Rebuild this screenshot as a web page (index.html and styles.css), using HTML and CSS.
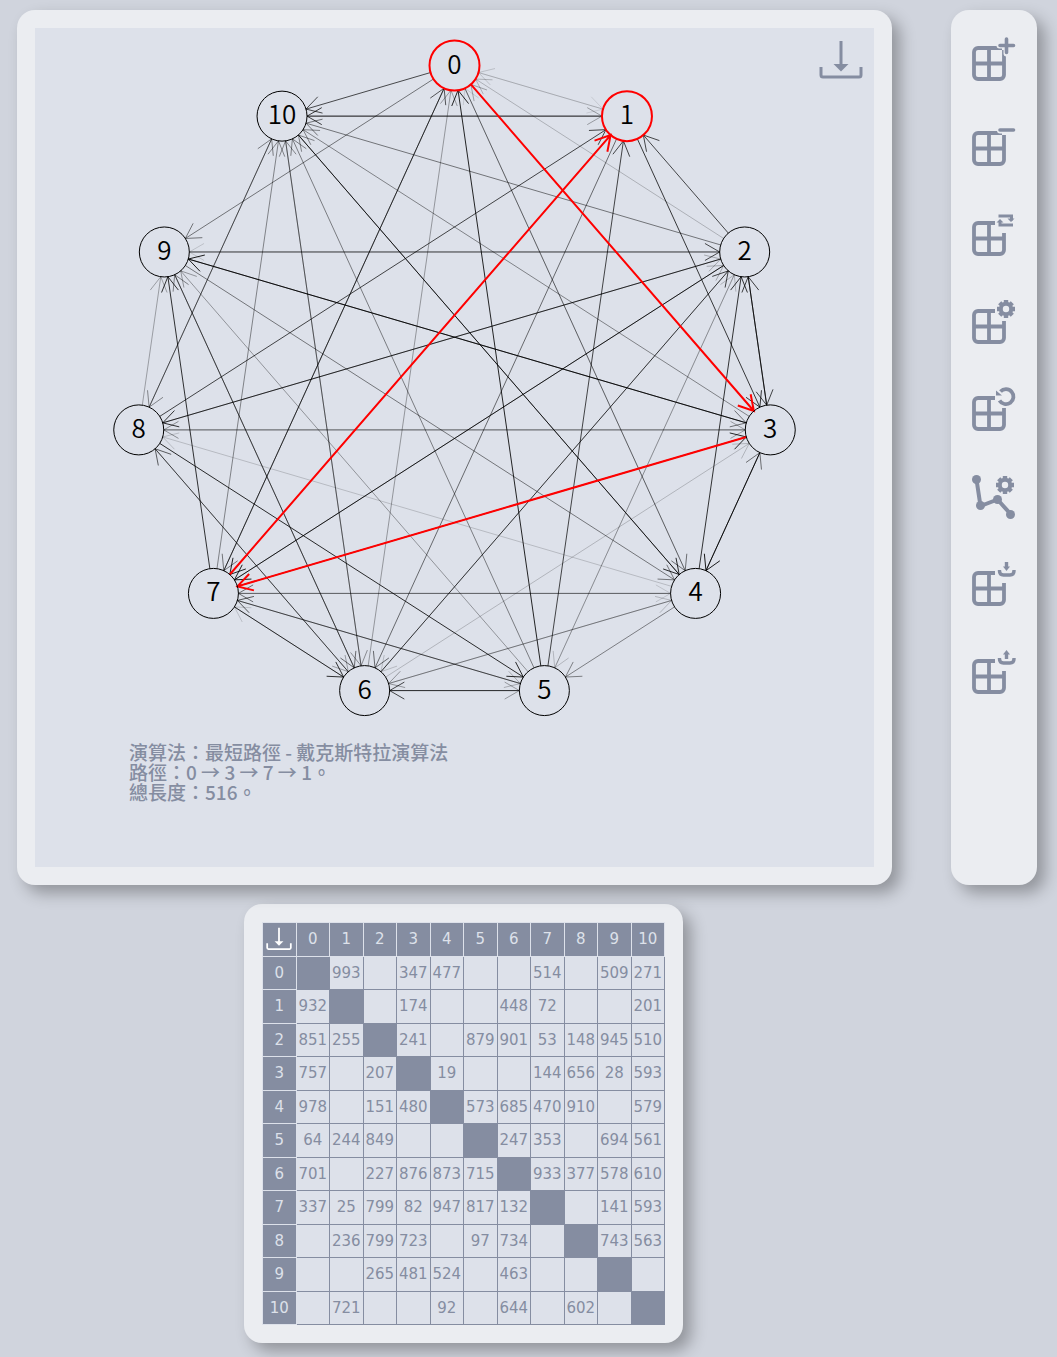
FILE: index.html
```html
<!DOCTYPE html>
<html lang="zh-Hant">
<head>
<meta charset="utf-8">
<meta name="viewport" content="width=device-width, initial-scale=1">
<title>最短路徑</title>
<link rel="stylesheet" href="styles.css">
</head>
<body>
<svg class="sprite" aria-hidden="true">
  <symbol id="grid-open" viewBox="0 0 44 44">
    <path d="M23 11H6a4 4 0 0 0-4 4v23a4 4 0 0 0 4 4h22a4 4 0 0 0 4-4V21M17 11v31M2 26.500h30" fill="none" stroke="currentColor" stroke-width="3.8"/>
  </symbol>
  <symbol id="gear" viewBox="-9 -9 18 18">
    <circle r="5.2" fill="none" stroke="currentColor" stroke-width="4"/>
    <path d="M0-9v3M0 9v-3M-9 0h3M9 0h-3M-6.3-6.3l2 2M6.3 6.3l-2-2M-6.3 6.3l2-2M6.3-6.3l-2 2" stroke="currentColor" stroke-width="4.400"/>
  </symbol>
  <symbol id="download" viewBox="0 0 44 40">
    <path d="M2 27v8q0 2 2 2h36q2 0 2-2v-8M22 1v26" fill="none" stroke="currentColor" stroke-width="3"/>
    <path d="M14.500 24h15L22 31.500z" fill="currentColor"/>
  </symbol>
</svg>
<div class="workspace">
  <main class="panel board">
    <svg class="graph" id="graph" viewBox="0 0 839 839" role="img" aria-label="graph"></svg>
    <p class="summary">演算法：最短路徑 - 戴克斯特拉演算法<br>路徑：0 → 3 → 7 → 1。<br>總長度：516。</p>
    <button class="board-save" aria-label="下載圖片"><svg><use href="#download"/></svg></button>
  </main>
  <nav class="panel tools">
    <button class="tool" aria-label="新增節點"><svg viewBox="0 0 44 44"><path d="M30 11H6a4 4 0 0 0-4 4v23a4 4 0 0 0 4 4h22a4 4 0 0 0 4-4V13M17 11v31M2 26.500h30" fill="none" stroke="currentColor" stroke-width="3.800"/><path d="M34.500 1.500v15M27.500 8.500h15" stroke="#ebedf1" stroke-width="6" stroke-linecap="round"/><path d="M34.500 2v13.500M28 8.500h13.500" stroke="currentColor" stroke-width="3.600" stroke-linecap="round"/></svg></button>
    <button class="tool" aria-label="刪除節點"><svg viewBox="0 0 44 44"><path d="M30 8H6a4 4 0 0 0-4 4v23a4 4 0 0 0 4 4h22a4 4 0 0 0 4-4V10M17 8v31M2 23.500h30" fill="none" stroke="currentColor" stroke-width="3.800"/><path d="M28 5.500h14.500" stroke="#ebedf1" stroke-width="6" stroke-linecap="round"/><path d="M28 5h13.500" stroke="currentColor" stroke-width="3.600" stroke-linecap="round"/></svg></button>
    <button class="tool" aria-label="隨機產生"><svg viewBox="0 0 44 44"><use href="#grid-open"/><path d="M26.500 4H39.500v4.500M41 13H28v-3.500" fill="none" stroke="currentColor" stroke-width="3"/><path d="M35.500 6.500H42.500L39 10zM24.500 10.500H31.500L28 7z" fill="currentColor"/></svg></button>
    <button class="tool" aria-label="表格設定"><svg viewBox="0 0 44 44"><use href="#grid-open"/><use href="#gear" x="25" y="0" width="18" height="18"/></svg></button>
    <button class="tool" aria-label="重設"><svg viewBox="0 0 44 44"><use href="#grid-open"/><path d="M28.500 4.500a7.500 7.500 0 1 1-1 9" fill="none" stroke="currentColor" stroke-width="3.800"/><path d="M24 3.500v5h6z" fill="currentColor"/></svg></button>
    <button class="tool" aria-label="演算法設定"><svg viewBox="0 0 44 44"><path d="M4.500 4.500L8.500 31 25.500 24.500 39 39.500" fill="none" stroke="currentColor" stroke-width="4"/><g fill="currentColor"><circle cx="4.500" cy="4.500" r="4.500"/><circle cx="8.500" cy="30.500" r="4.500"/><circle cx="25.500" cy="24.500" r="4.500"/><circle cx="38.500" cy="39.500" r="4.500"/></g><use href="#gear" x="24" y="1" width="18" height="18"/></svg></button>
    <button class="tool" aria-label="匯入"><svg viewBox="0 0 44 44"><use href="#grid-open"/><path d="M27.500 8v1q0 4 4 4h6.500q4 0 4-4V8M34.500 0v5" fill="none" stroke="currentColor" stroke-width="3.400"/><path d="M31 4.500h7l-3.500 4.500z" fill="currentColor"/></svg></button>
    <button class="tool" aria-label="匯出"><svg viewBox="0 0 44 44"><use href="#grid-open"/><path d="M27.500 8v1q0 4 4 4h6.500q4 0 4-4V8M34.500 4v5" fill="none" stroke="currentColor" stroke-width="3.400"/><path d="M31 4.500h7l-3.500-4.500z" fill="currentColor"/></svg></button>
  </nav>
</div>
<section class="panel weights">
  <table id="weights">
    <tr><th><button class="table-save" aria-label="下載表格"><svg><use href="#download"/></svg></button></th><th>0</th><th>1</th><th>2</th><th>3</th><th>4</th><th>5</th><th>6</th><th>7</th><th>8</th><th>9</th><th>10</th></tr>
    <tr><th>0</th><td class="self"></td><td>993</td><td></td><td>347</td><td>477</td><td></td><td></td><td>514</td><td></td><td>509</td><td>271</td></tr>
    <tr><th>1</th><td>932</td><td class="self"></td><td></td><td>174</td><td></td><td></td><td>448</td><td>72</td><td></td><td></td><td>201</td></tr>
    <tr><th>2</th><td>851</td><td>255</td><td class="self"></td><td>241</td><td></td><td>879</td><td>901</td><td>53</td><td>148</td><td>945</td><td>510</td></tr>
    <tr><th>3</th><td>757</td><td></td><td>207</td><td class="self"></td><td>19</td><td></td><td></td><td>144</td><td>656</td><td>28</td><td>593</td></tr>
    <tr><th>4</th><td>978</td><td></td><td>151</td><td>480</td><td class="self"></td><td>573</td><td>685</td><td>470</td><td>910</td><td></td><td>579</td></tr>
    <tr><th>5</th><td>64</td><td>244</td><td>849</td><td></td><td></td><td class="self"></td><td>247</td><td>353</td><td></td><td>694</td><td>561</td></tr>
    <tr><th>6</th><td>701</td><td></td><td>227</td><td>876</td><td>873</td><td>715</td><td class="self"></td><td>933</td><td>377</td><td>578</td><td>610</td></tr>
    <tr><th>7</th><td>337</td><td>25</td><td>799</td><td>82</td><td>947</td><td>817</td><td>132</td><td class="self"></td><td></td><td>141</td><td>593</td></tr>
    <tr><th>8</th><td></td><td>236</td><td>799</td><td>723</td><td></td><td>97</td><td>734</td><td></td><td class="self"></td><td>743</td><td>563</td></tr>
    <tr><th>9</th><td></td><td></td><td>265</td><td>481</td><td>524</td><td></td><td>463</td><td></td><td></td><td class="self"></td><td></td></tr>
    <tr><th>10</th><td></td><td>721</td><td></td><td></td><td>92</td><td></td><td>644</td><td></td><td>602</td><td></td><td class="self"></td></tr>
  </table>
</section>
<script src="graph.js"></script>
</body>
</html>
```
FILE: styles.css
```css
* { box-sizing: border-box; }

body {
  margin: 0;
  padding: 10px 20px 14px 17px;
  background: #d0d4dd;
  color: #858da1;
  font-family: "Noto Sans", "Noto Sans CJK TC", sans-serif;
}

button {
  padding: 0;
  border: 0;
  background: none;
  color: inherit;
  cursor: pointer;
}

svg { display: block; }

.sprite {
  position: absolute;
  width: 0;
  height: 0;
}

.panel {
  padding: 18px;
  border-radius: 18px;
  background: #ebedf1;
  box-shadow: 8px 8px 16px rgba(0, 0, 0, 0.3);
}

.workspace {
  display: flex;
  gap: 59px;
}

.board {
  position: relative;
  flex: 1;
}

.graph {
  width: 100%;
  background: #dde1ea;
}

.graph circle { fill: none; stroke: #000; }
.graph .edge { fill: none; stroke: #000; }
.graph circle.on-path { stroke: #f00; stroke-width: 2; }
.graph .edge.on-path { stroke: #f00; stroke-width: 2; }

.graph text {
  fill: #000;
  font-family: "Noto Sans CJK TC", sans-serif;
  font-size: 26px;
  font-weight: 350;
  text-anchor: middle;
}

.summary {
  position: absolute;
  left: 112px;
  bottom: 83px;
  margin: 0;
  font-family: "Noto Sans CJK TC", sans-serif;
  font-size: 19px;
  font-weight: 500;
  line-height: 20px;
}

.board-save {
  position: absolute;
  top: 30px;
  right: 29px;
  width: 44px;
  height: 40px;
}

.board-save svg,
.table-save svg {
  width: 100%;
  height: 100%;
}

.tools {
  display: flex;
  flex-direction: column;
  align-items: center;
  justify-content: space-between;
  width: 86px;
  padding-top: 27px;
  padding-bottom: 191px;
}

.tool svg {
  width: 44px;
  height: 44px;
}

.weights {
  width: fit-content;
  margin: 19px auto 0 227px;
}

table {
  width: 403px;
  height: 403px;
  border-collapse: collapse;
  table-layout: fixed;
  font-family: "DejaVu Sans", sans-serif;
  font-size: 15px;
  line-height: 20px;
  text-align: center;
}

td, th {
  height: 33px;
  padding: 0;
  font-weight: 400;
}

td {
  border: 1px solid #858da1;
  background: #dde1ea;
}

th {
  border: 1px solid #dde1ea;
  background: #858da1;
  color: #dde1ea;
}

td.self { background: #858da1; }

.table-save {
  display: block;
  width: 26px;
  height: 24px;
  margin: 0 auto;
  color: #fff;
}
```
FILE: graph.js
```js
const SVG = 'http://www.w3.org/2000/svg';
const graph = document.getElementById('graph');
const rows = [...document.getElementById('weights').rows].slice(1);
const weights = rows.map(row => [...row.cells].slice(1).map(cell => Number(cell.textContent)));

const path = [0, 3, 7, 1];
const center = { x: 419.5, y: 356.5 };
const ringRadius = 319;
const nodeRadius = 25;
const headLength = 17;

function add(name, attributes, text) {
  const element = document.createElementNS(SVG, name);
  for (const key in attributes) element.setAttribute(key, attributes[key]);
  if (text !== undefined) element.textContent = text;
  graph.append(element);
}

const nodes = weights.map((_, i) => {
  const angle = 2 * Math.PI * i / weights.length;
  return {
    x: center.x + ringRadius * Math.sin(angle),
    y: center.y - ringRadius * Math.cos(angle)
  };
});

function drawEdge(from, to, onPath) {
  const a = nodes[from];
  const b = nodes[to];
  const angle = Math.atan2(b.y - a.y, b.x - a.x);
  const start = [a.x + nodeRadius * Math.cos(angle), a.y + nodeRadius * Math.sin(angle)];
  const tip = [b.x - nodeRadius * Math.cos(angle), b.y - nodeRadius * Math.sin(angle)];
  const wing = turn => [
    tip[0] - headLength * Math.cos(angle + turn),
    tip[1] - headLength * Math.sin(angle + turn)
  ];
  add('path', {
    class: onPath ? 'edge on-path' : 'edge',
    d: `M${start}L${tip}M${wing(Math.PI / 6)}L${tip}L${wing(-Math.PI / 6)}`,
    'stroke-opacity': onPath ? 1 : 0.9 - weights[from][to] / 1250
  });
}

const isStep = (from, to) => path.some((node, i) => node === from && path[i + 1] === to);

weights.forEach((row, from) => row.forEach((weight, to) => {
  if (weight && !isStep(from, to)) drawEdge(from, to, false);
}));
path.slice(1).forEach((to, i) => drawEdge(path[i], to, true));

const ends = [path[0], path[path.length - 1]];
nodes.forEach((node, i) => {
  add('circle', { cx: node.x, cy: node.y, r: nodeRadius, class: ends.includes(i) ? 'on-path' : '' });
  add('text', { x: node.x, y: node.y + 8 }, i);
});
```
